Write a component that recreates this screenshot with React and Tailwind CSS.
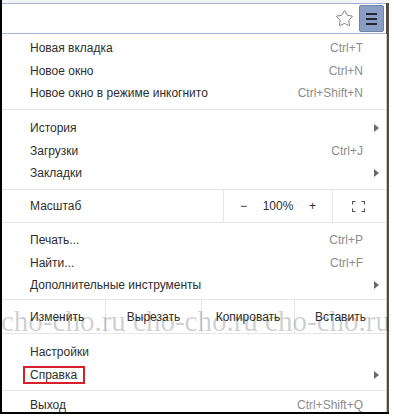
import { Star } from "lucide-react";

const font = { fontFamily: '"Liberation Sans", Arial, sans-serif' };

const Arrow = () => (
  <svg width="5" height="8" viewBox="0 0 5 8" className="absolute right-[7px] top-1/2 -translate-y-1/2">
    <path d="M0 0 L5 4 L0 8 Z" fill="#6a6a6a" />
  </svg>
);

const Row = ({ label, shortcut, arrow }) => (
  <div className="relative flex h-[22.5px] items-center justify-between pl-[28px] pr-[23px]">
    <span className="text-[#2e2e2e]">{label}</span>
    {shortcut && <span className="text-[#8c8c8c]">{shortcut}</span>}
    {arrow && <Arrow />}
  </div>
);

const Sep = () => <div className="h-px bg-[#e6e6e6]" />;

export default function App() {
  return (
    <div className="relative h-[417px] w-[394px] overflow-hidden bg-white text-[12px] leading-none" style={font}>
      <div className="flex h-[414px] w-[389px] flex-col border-l-2 border-b-2 border-black">
        {/* toolbar */}
        <div className="flex h-[34px] shrink-0 bg-[#f2f4f8] pt-[3px]">
          <div className="flex flex-1 items-center justify-end border-y border-[#a3b3d4] bg-white pr-[2px]">
            <Star size={19} strokeWidth={1.1} className="mr-[5px] text-[#707070]" />
            <div className="flex h-[27px] w-[25px] flex-col items-center justify-center gap-[3px] rounded-[2px] border border-[#6f82aa] bg-[#8a9dc5]">
              <div className="h-[2px] w-[11px] bg-[#232634]" />
              <div className="h-[2px] w-[11px] bg-[#232634]" />
              <div className="h-[2px] w-[11px] bg-[#232634]" />
            </div>
          </div>
          <div className="w-[3px] bg-[#5a4a3e]" />
        </div>

        {/* menu */}
        <div className="flex min-h-0 flex-1 overflow-hidden">
          <div className="flex-1 overflow-hidden border-r border-[#c8c8c8] bg-white">
            <div className="pt-[3px] pb-[4.5px]">
              <Row label="Новая вкладка" shortcut="Ctrl+T" />
              <Row label="Новое окно" shortcut="Ctrl+N" />
              <Row label="Новое окно в режиме инкогнито" shortcut="Ctrl+Shift+N" />
            </div>
            <Sep />
            <div className="pt-[7px] pb-[4.5px]">
              <Row label="История" arrow />
              <Row label="Загрузки" shortcut="Ctrl+J" />
              <Row label="Закладки" arrow />
            </div>
            <Sep />
            <div className="flex h-[32px] items-center">
              <div className="flex-1 pl-[28px] text-[#2e2e2e]">Масштаб</div>
              <div className="flex h-full w-[110px] items-center justify-between border-x border-[#e6e6e6] px-[16px] text-[#2e2e2e]">
                <span>−</span>
                <span>100%</span>
                <span>+</span>
              </div>
              <div className="flex w-[53px] items-center justify-center pr-[2px]">
                <svg width="13" height="11" viewBox="0 0 13 11" fill="none" stroke="#555" strokeWidth="1.2">
                  <path d="M0.5 3.5 V0.5 H3.5 M9.5 0.5 H12.5 V3.5 M12.5 7.5 V10.5 H9.5 M3.5 10.5 H0.5 V7.5" />
                </svg>
              </div>
            </div>
            <Sep />
            <div className="pt-[6px] pb-[2.5px]">
              <Row label="Печать..." shortcut="Ctrl+P" />
              <Row label="Найти..." shortcut="Ctrl+F" />
              <Row label="Дополнительные инструменты" arrow />
            </div>
            <Sep />
            <div className="flex h-[33px] items-center text-[#2e2e2e]">
              <div className="w-[103px] pl-[28px]">Изменить</div>
              <div className="flex h-full w-[96px] items-center justify-center border-l border-[#e6e6e6]">Вырезать</div>
              <div className="flex h-full w-[93px] items-center justify-center border-l border-[#e6e6e6]">Копировать</div>
              <div className="flex h-full flex-1 items-center justify-center border-l border-[#e6e6e6]">Вставить</div>
            </div>
            <Sep />
            <div className="pt-[7px] pb-[4px]">
              <Row label="Настройки" />
              <div className="relative flex h-[22.5px] items-center pl-[28px]">
                <span className="text-[#2e2e2e]">Справка</span>
                <div className="absolute left-[21px] top-[2px] h-[18px] w-[62px] border-2 border-[#d8202c]" />
                <Arrow />
              </div>
            </div>
            <Sep />
            <div className="pt-[3px]">
              <Row label="Выход" shortcut="Ctrl+Shift+Q" />
            </div>
          </div>
          <div className="w-[2px] bg-[#5a4a3e]" />
        </div>
      </div>

      {/* watermark */}
      <div
        className="pointer-events-none absolute left-[1px] top-[304px] whitespace-nowrap text-[29px] leading-[34px] text-black/20"
        style={{ fontFamily: '"Liberation Serif", serif' }}
      >
        cho-cho.ru cho-cho.ru cho-cho.ru
      </div>
    </div>
  );
}
